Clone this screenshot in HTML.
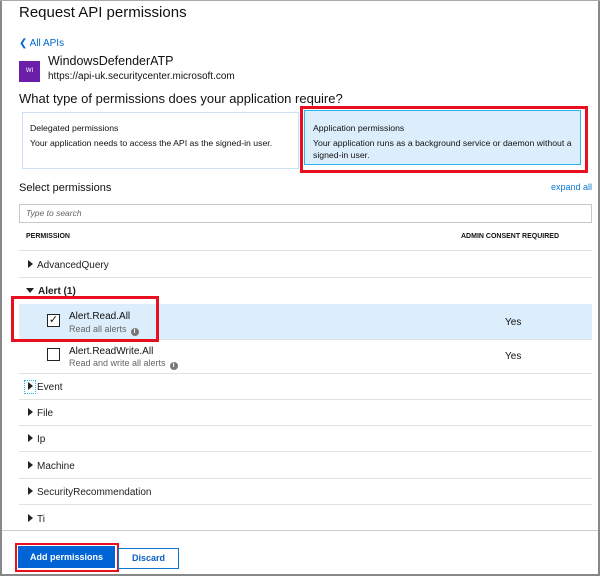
<!DOCTYPE html>
<html><head><style>
body{margin:0;width:600px;height:576px;overflow:hidden;background:#fff;font-family:"Liberation Sans",sans-serif;color:#111;position:relative}
.a{position:absolute;white-space:nowrap}
.line{position:absolute;left:19px;width:573px;height:1px;background:#e1e1e1}
.tri{display:inline-block;width:0;height:0;border-top:4px solid transparent;border-bottom:4px solid transparent;border-left:5px solid #222;margin-right:4px;vertical-align:0}
.row{font-size:10px;color:#222}
.info{display:inline-block;width:8px;height:8px;border-radius:50%;background:#777;color:#fff;font-size:7px;text-align:center;line-height:8px;font-weight:bold;vertical-align:-1px;margin-left:4px}
</style></head><body>
<div class="a" style="left:0;top:0;width:2px;height:576px;background:#888"></div>
<div class="a" style="left:598px;top:0;width:2px;height:576px;background:#888"></div>
<div class="a" style="left:0;top:0;width:600px;height:1px;background:#aaa"></div>
<div class="a" style="left:19px;top:4px;font-size:15px">Request API permissions</div>
<div class="a" style="left:19px;top:38px;font-size:10px;color:#0066cc">&#10094; All APIs</div>
<div class="a" style="left:19px;top:61px;width:21px;height:21px;background:#6b1fa8;color:#fff;font-size:6px;text-align:center;line-height:21px">WI</div>
<div class="a" style="left:48px;top:54px;font-size:12.5px">WindowsDefenderATP</div>
<div class="a" style="left:48px;top:71px;font-size:10px">https://api-uk.securitycenter.microsoft.com</div>
<div class="a" style="left:19px;top:91px;font-size:13px">What type of permissions does your application require?</div>
<div class="a" style="left:22px;top:112px;width:275px;height:55px;border:1px solid #cfe0f5"></div>
<div class="a" style="left:30px;top:123px;font-size:8.7px">Delegated permissions</div>
<div class="a" style="left:30px;top:138px;font-size:8.7px">Your application needs to access the API as the signed-in user.</div>
<div class="a" style="left:300px;top:106px;width:282px;height:61px;border:3px solid #e8101e"></div>
<div class="a" style="left:304px;top:110px;width:275px;height:53px;background:#dcedfc;border:1px solid #2cb6f0"></div>
<div class="a" style="left:313px;top:123px;font-size:8.7px">Application permissions</div>
<div class="a" style="left:313px;top:137px;font-size:8.7px;line-height:12px;white-space:normal;width:268px">Your application runs as a background service or daemon without a signed-in user.</div>
<div class="a" style="left:19px;top:182px;font-size:11px">Select permissions</div>
<div class="a" style="left:551px;top:182px;font-size:9px;color:#0b78d4">expand all</div>
<div class="a" style="left:19px;top:204px;width:571px;height:17px;border:1px solid #c8c8c8"></div>
<div class="a" style="left:26px;top:208px;font-size:8.5px;font-style:italic;color:#666">Type to search</div>
<div class="a" style="left:26px;top:233px;font-size:7px;font-weight:bold">PERMISSION</div>
<div class="a" style="left:461px;top:233px;font-size:7px;font-weight:bold">ADMIN CONSENT REQUIRED</div>
<div class="line" style="top:250px"></div>
<div class="a row" style="left:28px;top:260px"><span class="tri"></span>AdvancedQuery</div>
<div class="line" style="top:277px"></div>
<div class="a row" style="left:26px;top:286px;font-weight:bold"><span class="tri" style="border-left:4px solid transparent;border-right:4px solid transparent;border-top:5px solid #222;border-bottom:0;vertical-align:1px"></span>Alert (1)</div>
<div class="a" style="left:19px;top:304px;width:573px;height:35px;background:#dcedfc;border-bottom:1px solid #e1e1e1"></div>
<div class="a" style="left:11px;top:296px;width:142px;height:40px;border:3px solid #e8101e"></div>
<div class="a" style="left:47px;top:314px;width:11px;height:11px;border:1px solid #222;background:#fff;font-size:11px;line-height:11px;text-align:center">&#10003;</div>
<div class="a" style="left:69px;top:311px;font-size:10px">Alert.Read.All</div>
<div class="a" style="left:69px;top:324px;font-size:9px;color:#666">Read all alerts<span class="info">i</span></div>
<div class="a" style="left:505px;top:317px;font-size:10px">Yes</div>
<div class="a" style="left:47px;top:348px;width:11px;height:11px;border:1px solid #222;background:#fff"></div>
<div class="a" style="left:69px;top:346px;font-size:10px">Alert.ReadWrite.All</div>
<div class="a" style="left:69px;top:358px;font-size:9px;color:#666">Read and write all alerts<span class="info">i</span></div>
<div class="a" style="left:505px;top:351px;font-size:10px">Yes</div>
<div class="line" style="top:373px"></div>
<div class="a" style="left:24px;top:380px;width:10px;height:12px;border:1px dotted #2cb6f0"></div>
<div class="a row" style="left:28px;top:382px"><span class="tri"></span>Event</div>
<div class="line" style="top:399px"></div>
<div class="a row" style="left:28px;top:408px"><span class="tri"></span>File</div>
<div class="line" style="top:425px"></div>
<div class="a row" style="left:28px;top:434px"><span class="tri"></span>Ip</div>
<div class="line" style="top:451px"></div>
<div class="a row" style="left:28px;top:461px"><span class="tri"></span>Machine</div>
<div class="line" style="top:478px"></div>
<div class="a row" style="left:28px;top:487px"><span class="tri"></span>SecurityRecommendation</div>
<div class="line" style="top:504px"></div>
<div class="a row" style="left:28px;top:514px"><span class="tri"></span>Ti</div>
<div class="a" style="left:2px;top:530px;width:596px;height:1px;background:#ccc"></div>
<div class="a" style="left:15px;top:543px;width:100px;height:25px;border:2px solid #e8101e"></div>
<div class="a" style="left:18px;top:546px;width:97px;height:22px;background:#0063d6;color:#fff;font-size:9px;font-weight:bold;text-align:center;line-height:22px">Add permissions</div>
<div class="a" style="left:118px;top:548px;width:59px;height:19px;border:1px solid #0b78d4;color:#0b5fc4;font-size:9px;font-weight:bold;text-align:center;line-height:19px">Discard</div>
<div class="a" style="left:0;top:574px;width:600px;height:2px;background:#888"></div>
</body></html>
